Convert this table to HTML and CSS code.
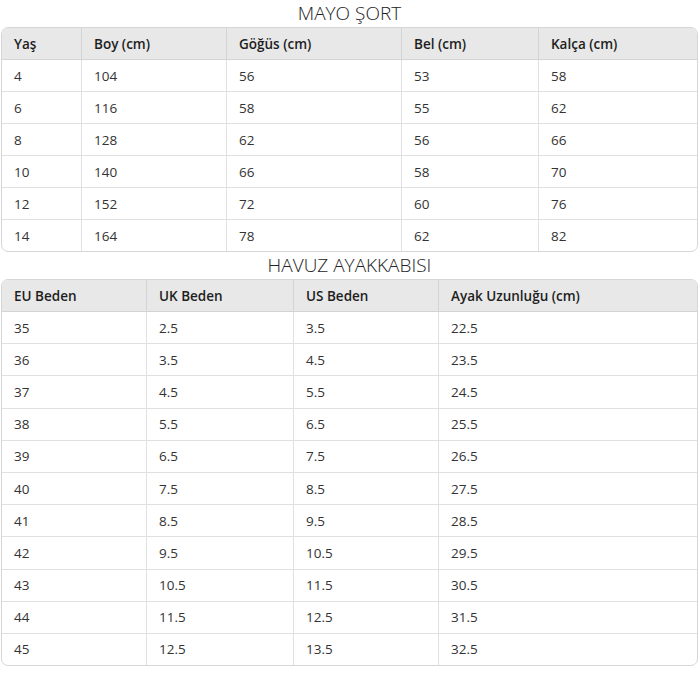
FILE: index.html
```html
<!DOCTYPE html>
<html lang="tr">
<head>
<meta charset="utf-8">
<link rel="stylesheet" href="styles.css">
</head>
<body>
<div class="page">
  <h2 class="title">MAYO ŞORT</h2>
  <div class="card">
    <table class="grid t1">
      <colgroup><col class="c1"><col class="c2"><col class="c3"><col class="c4"><col class="c5"></colgroup>
      <thead><tr><th>Yaş</th><th>Boy (cm)</th><th>Göğüs (cm)</th><th>Bel (cm)</th><th>Kalça (cm)</th></tr></thead>
      <tbody>
        <tr><td>4</td><td>104</td><td>56</td><td>53</td><td>58</td></tr>
        <tr><td>6</td><td>116</td><td>58</td><td>55</td><td>62</td></tr>
        <tr><td>8</td><td>128</td><td>62</td><td>56</td><td>66</td></tr>
        <tr><td>10</td><td>140</td><td>66</td><td>58</td><td>70</td></tr>
        <tr><td>12</td><td>152</td><td>72</td><td>60</td><td>76</td></tr>
        <tr><td>14</td><td>164</td><td>78</td><td>62</td><td>82</td></tr>
      </tbody>
    </table>
  </div>
  <h2 class="title">HAVUZ AYAKKABISI</h2>
  <div class="card">
    <table class="grid t2">
      <colgroup><col class="d1"><col class="d2"><col class="d3"><col class="d4"></colgroup>
      <thead><tr><th>EU Beden</th><th>UK Beden</th><th>US Beden</th><th>Ayak Uzunluğu (cm)</th></tr></thead>
      <tbody>
        <tr><td>35</td><td>2.5</td><td>3.5</td><td>22.5</td></tr>
        <tr><td>36</td><td>3.5</td><td>4.5</td><td>23.5</td></tr>
        <tr><td>37</td><td>4.5</td><td>5.5</td><td>24.5</td></tr>
        <tr><td>38</td><td>5.5</td><td>6.5</td><td>25.5</td></tr>
        <tr><td>39</td><td>6.5</td><td>7.5</td><td>26.5</td></tr>
        <tr><td>40</td><td>7.5</td><td>8.5</td><td>27.5</td></tr>
        <tr><td>41</td><td>8.5</td><td>9.5</td><td>28.5</td></tr>
        <tr><td>42</td><td>9.5</td><td>10.5</td><td>29.5</td></tr>
        <tr><td>43</td><td>10.5</td><td>11.5</td><td>30.5</td></tr>
        <tr><td>44</td><td>11.5</td><td>12.5</td><td>31.5</td></tr>
        <tr><td>45</td><td>12.5</td><td>13.5</td><td>32.5</td></tr>
      </tbody>
    </table>
  </div>
</div>
</body>
</html>
```

FILE: styles.css
```css
html, body {
  margin: 0;
  padding: 0;
  background: #ffffff;
}
body {
  font-family: "Open Sans", "Noto Sans", "Liberation Sans", sans-serif;
  color: #222222;
}
.page {
  padding: 0 2px 0 1px;
}
.title {
  margin: 0;
  height: 27px;
  line-height: 26px;
  text-align: center;
  font-size: 19px;
  font-weight: 300;
  color: #222222;
}
.card {
  border: 1px solid #d6d6d6;
  border-radius: 7px;
  overflow: hidden;
}
.grid {
  width: 100%;
  border-collapse: separate;
  border-spacing: 0;
  table-layout: fixed;
  font-size: 13.5px;
}
.grid th, .grid td {
  height: 31px;
  padding: 0 12px;
  text-align: left;
  vertical-align: middle;
  border-right: 1px solid #e0e0e0;
  border-bottom: 1px solid #e0e0e0;
  white-space: nowrap;
}
.t2 td {
  height: 31.2px;
}
.grid th:last-child, .grid td:last-child {
  border-right: none;
}
.grid tbody tr:last-child td {
  border-bottom: none;
}
.grid th {
  background: #e8e8e8;
  font-weight: 600;
  color: #1e1e1e;
  border-right-color: #d4d4d4;
  border-bottom-color: #d4d4d4;
}
.grid td {
  color: #333333;
}
.c1 { width: 80px; }
.c2 { width: 145px; }
.c3 { width: 175px; }
.c4 { width: 137px; }
.c5 { width: auto; }
.d1 { width: 145px; }
.d2 { width: 147px; }
.d3 { width: 145px; }
.d4 { width: auto; }
```
